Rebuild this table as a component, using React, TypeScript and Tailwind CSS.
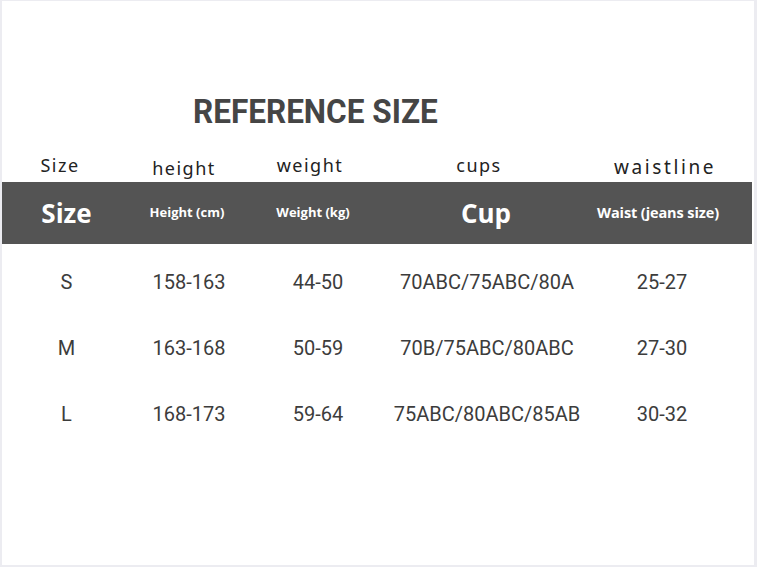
const rows = [
  { size: "S", height: "158-163", weight: "44-50", cup: "70ABC/75ABC/80A", waist: "25-27" },
  { size: "M", height: "163-168", weight: "50-59", cup: "70B/75ABC/80ABC", waist: "27-30" },
  { size: "L", height: "168-173", weight: "59-64", cup: "75ABC/80ABC/85AB", waist: "30-32" },
];

export default function App() {
  return (
    <div className="w-[757px] h-[567px] bg-white border-l-2 border-t border-r-[3px] border-b-2 border-[#ececf1] overflow-hidden">
      {/* title */}
      <div className="h-[95px]" />
      <h1 className="pl-[191px] text-[#454545] text-[33px] font-bold leading-[32px] font-['Roboto',sans-serif]">
        <span className="inline-block origin-left scale-x-[0.955]">REFERENCE SIZE</span>
      </h1>

      {/* english labels */}
      <div className="flex mt-[20px] h-[30px] items-end text-[18px] text-[#222] tracking-[1.5px] font-['Noto_Sans',sans-serif]">
        <div className="w-[116px] text-center leading-[26px]">Size</div>
        <div className="w-[132px] text-center leading-[20px]">height</div>
        <div className="w-[120px] text-center leading-[26px]">weight</div>
        <div className="w-[218px] text-center leading-[26px]">cups</div>
        <div className="w-[154px] text-center leading-[22px] text-[19px] tracking-[2.6px]">waistline</div>
      </div>

      {/* dark header band */}
      <div className="mt-[4px] mr-[2px] h-[62px] bg-[#545454] flex items-center text-white font-bold font-['Open_Sans',sans-serif]">
        <div className="w-[129px] text-center text-[26px]">Size</div>
        <div className="w-[112px] text-center text-[13px]">Height (cm)</div>
        <div className="w-[140px] text-center text-[13px]">Weight (kg)</div>
        <div className="w-[206px] text-center text-[26px]">Cup</div>
        <div className="w-[138px] text-center text-[14.5px] tracking-[-0.1px]">Waist (jeans size)</div>
      </div>

      {/* data */}
      <div className="pt-[23px] text-[#3c3c3c] text-[20px] font-['Roboto',sans-serif]">
        {rows.map((r) => (
          <div key={r.size} className="flex h-[66px] items-start">
            <div className="w-[129px] text-center">{r.size}</div>
            <div className="w-[116px] text-center">{r.height}</div>
            <div className="w-[142px] text-center">{r.weight}</div>
            <div className="w-[196px] text-center">{r.cup}</div>
            <div className="w-[154px] text-center">{r.waist}</div>
          </div>
        ))}
      </div>
    </div>
  );
}
